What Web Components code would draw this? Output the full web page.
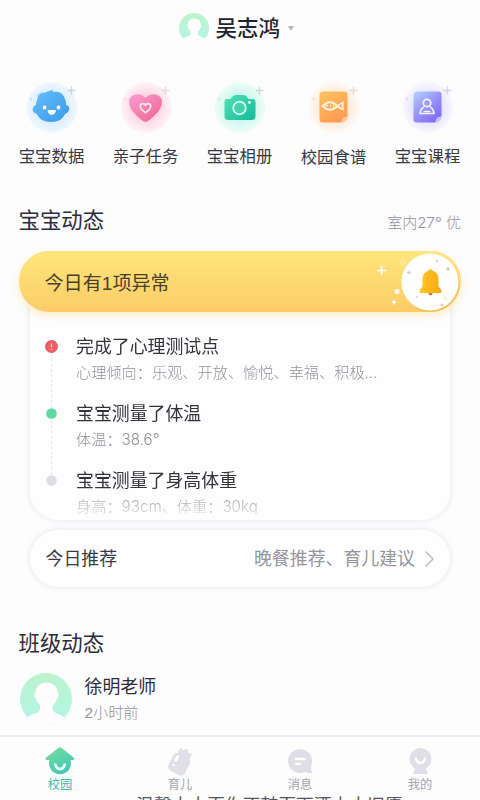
<!DOCTYPE html>
<html lang="zh-CN">
<head>
<meta charset="utf-8">
<title>校园</title>
<style>
html,body{margin:0;height:100%;overflow:hidden}
body{background:#fefdfe;color:#30303c;font-family:"Liberation Sans","Noto Sans CJK SC",sans-serif}
</style>
</head>
<body>
<campus-app></campus-app>
<script>
const define = (name, render) => customElements.define(name, class extends HTMLElement {
  connectedCallback() {
    if (this.shadowRoot) return;
    this.attachShadow({ mode: 'open' }).innerHTML = render(this);
  }
});

const sparkle = c => `<path d="M45.500 3.500v8M41.500 7.500h8" stroke="${c}" stroke-width="1.400" opacity=".6"/><path d="M5 14v4M3 16h4" stroke="${c}" opacity=".3"/>`;

const icons = {
  data: `<defs><linearGradient id="g" x1="0" y1="0" x2="1" y2="1"><stop stop-color="#65bdfb"/><stop offset="1" stop-color="#3a9bea"/></linearGradient><radialGradient id="h"><stop offset=".5" stop-color="#c9e6ff"/><stop offset="1" stop-color="#edf6ff"/></radialGradient></defs>
    <circle cx="26" cy="24.500" r="25.500" fill="url(#h)" opacity=".75"/>${sparkle('#a9bdd3')}
    <g transform="translate(-.5 2)"><path d="M12 14c0-4 4-7 8-6.500 3-1.500 5-1.500 7-2.500l.5 2c6-1 10 1 12 7 1 2 1 4 1 6 4 0 5 7-1 9-2 5-7 8-14 8s-12-3-14-8c-6-1-5-8-1-9 0-2 .5-4 1.500-6z" fill="url(#g)"/><path d="M11 11q3-4 7-3" stroke="#8ed2ff" opacity=".7"/>
    <circle cx="19" cy="22.500" r="1.900" fill="#fff"/><circle cx="33" cy="22.500" r="1.900" fill="#fff"/><path d="M22 25h8.500c-.3 6.300-8.200 6.300-8.500 0z" fill="#fff"/></g>`,
  task: `<defs><linearGradient id="g" x1="0" y1="0" x2="1" y2="1"><stop stop-color="#fb9ed1"/><stop offset="1" stop-color="#ee638e"/></linearGradient><radialGradient id="h"><stop offset=".5" stop-color="#ffcadb"/><stop offset="1" stop-color="#fff1f6"/></radialGradient></defs>
    <circle cx="26" cy="24.500" r="25.500" fill="url(#h)" opacity=".75"/>${sparkle('#d9bfd0')}
    <path d="M25.500 15c4-6 16.500-5 16.500 4 0 8-8 14.500-14 19q-2.500 1.700-5 0C17 33.500 9 27 9 19c0-9 12.500-10 16.500-4z" fill="url(#g)"/>
    <path d="M25.500 22.200c1.600-2.700 5.200-1.800 5.200 1.300 0 2.700-3.200 4.700-5.200 6.200-2-1.500-5.200-3.500-5.200-6.200 0-3.100 3.600-4 5.200-1.300z" fill="none" stroke="#ffe6ee" stroke-width="1.700"/>`,
  album: `<defs><linearGradient id="g" x1="0" y1="0" x2="1" y2="1"><stop stop-color="#56e0b5"/><stop offset="1" stop-color="#12bd98"/></linearGradient><radialGradient id="h"><stop offset=".5" stop-color="#bdf5e5"/><stop offset="1" stop-color="#ebfcf7"/></radialGradient></defs>
    <circle cx="26" cy="24.500" r="25.500" fill="url(#h)" opacity=".75"/>${sparkle('#a5c9c0')}
    <g transform="translate(-.5 2)"><path d="M13 14h4l2-2.500Q20 10 22 10h8q2 0 3 1.500l2 2.500h4q3 0 3 3v14q0 4-4 4H15q-4 0-4-4V17q0-3 2-3z" fill="url(#g)"/><circle cx="26" cy="23" r="6.300" fill="#52d8b8" fill-opacity=".5" stroke="#d5fff4" stroke-width="1.700"/><circle cx="36" cy="17.500" r="1.400" fill="#e0fff7"/></g>`,
  menu: `<defs><linearGradient id="g" x1="0" y1="0" x2=".6" y2="1"><stop stop-color="#ffc45f"/><stop offset="1" stop-color="#ff9a54"/></linearGradient><radialGradient id="h"><stop offset=".45" stop-color="#ffdfc5"/><stop offset="1" stop-color="#fff8f2"/></radialGradient></defs>
    <circle cx="26" cy="24.500" r="25.500" fill="url(#h)" opacity=".75"/>${sparkle('#d9c5b5')}
    <g transform="translate(-.5 1.500)"><path d="M16 7h21q3 0 3 3v22q-5 1-6 6H15q-3 0-3-3V11q0-4 4-4z" fill="url(#g)"/><path d="M34 38c3 0 6-2 6-6-4 0-6 2-6 6z" fill="#ffc79a"/>
    <path d="M30 21.500q3.500-3 5.500-3.500-1 3.500 0 7-2-.5-5.500-3.500zm0 0q-7.500 7.500-15 0 7.500-7.500 15 0z" fill="none" stroke="#fff0dc" stroke-width="1.800"/><circle cx="19" cy="21" r="1.200" fill="#fff0dc"/><path d="M23 20v3M26 20v3" stroke="#fff0dc"/></g>`,
  course: `<defs><linearGradient id="g" x1="0" y1="0" x2=".8" y2="1"><stop stop-color="#b5d3ff"/><stop offset=".5" stop-color="#9995fa"/><stop offset="1" stop-color="#7f68f3"/></linearGradient><radialGradient id="h"><stop offset=".45" stop-color="#dcd7ff"/><stop offset="1" stop-color="#f7f5ff"/></radialGradient></defs>
    <circle cx="26" cy="24.500" r="25.500" fill="url(#h)" opacity=".75"/>${sparkle('#bdb9d3')}
    <g transform="translate(-.5 1.500)"><path d="M16 7h21q3 0 3 3v22q-5 1-6 6H15q-3 0-3-3V11q0-4 4-4z" fill="url(#g)"/><path d="M34 38c3 0 6-2 6-6-4 0-6 2-6 6z" fill="#c9c0ff"/>
    <circle cx="25.500" cy="18.500" r="3.700" fill="none" stroke="#f2f2ff" stroke-width="1.800"/><path d="M22.500 22.500q-3 1-4 6.500h14q-1-5.500-4-6.500M22 27h7" fill="none" stroke="#f2f2ff" stroke-width="1.700" stroke-linejoin="round"/></g>`
};

const tabs = {
  home: `<defs><linearGradient id="g" x1="0" y1="0" x2=".6" y2="1"><stop stop-color="#7edc9c"/><stop offset="1" stop-color="#3fc9b4"/></linearGradient></defs><path d="M15 1.500Q16 .8 17 1.500L30 12q.6 2-1.500 2H26.500A11 11 0 1 1 5.500 14H3q-2.200 0-1.500-2z" fill="url(#g)"/><path d="M11 17.500q1.200 5.500 5 5.500t5-5.500" fill="none" stroke="#e8fff8" stroke-width="2.800"/>`,
  bottle: `<g transform="rotate(27 16 16)"><rect x="7" y="8.500" width="18.500" height="19.500" rx="4.500" fill="#e0dfe7"/><path d="M10.500 9V4l3 1 3-3 3 3 3-1V9z" fill="#e0dfe7" stroke="#e0dfe7" stroke-width="1.500" stroke-linejoin="round"/><path d="M11.500 12.500v4" stroke="#fff" stroke-width="3" stroke-linecap="round"/><circle cx="11.500" cy="21.500" r="1.200" fill="#fff"/></g>`,
  chat: `<path d="M16 3a12 12 0 0 1 12 12c0 4-1 6-1 7q0 3 1.500 5h-5q-1.500-1-2.500-1-2 1-5 1a12 12 0 0 1 0-24z" fill="#e0dfe7"/><path d="M12 13h9M12 17.800h4" stroke="#fff" stroke-width="2.300" stroke-linecap="round"/>`,
  me: `<path d="M16.500 2a11 11 0 0 1 5.500 20.500l1.500 4q.5 1.500-1 1.500H10.500q-1.500 0-1-1.500l1.500-4A11 11 0 0 1 16.500 2z" fill="#e0dfe7"/><path d="M12 12.500q1 4.500 4.500 4.500t4.500-4.500" fill="none" stroke="#fff" stroke-width="2.500" stroke-linecap="round"/>`
};

define('user-avatar', () => `<style>:host{display:block;flex:none}svg{display:block;width:100%;height:100%}</style>
  <svg viewBox="0 0 52 52"><defs><linearGradient id="a" x1="0" y1="0" x2="0" y2="1"><stop stop-color="#bdf3ce"/><stop offset="1" stop-color="#b1f5e9"/></linearGradient><clipPath id="c"><circle cx="26" cy="26" r="26"/></clipPath></defs>
  <g clip-path="url(#c)"><rect width="52" height="52" fill="url(#a)"/><path d="M26.500 9.500c7 0 11 4.500 11 10.500 2 1 1.500 4.500-.4 5.500-.8 3-2.300 5-4.400 6.500v4c0 2 2 3.500 4 4.500 4 1.500 8 3 9 6.500v5H6v-5c1-3.500 5-5 9-6.500 3-1 5-2.500 5-4.500v-4c-2-1.500-3.300-3.500-4-6.500-2-1-2.400-4.500-.4-5.500 0-6 4-10.500 10.900-10.500z" fill="#fefdfe"/></g></svg>`);

define('app-header', () => `<style>:host{display:flex;height:57px;align-items:center;padding-left:178.500px;box-sizing:border-box;font-size:21.500px;font-weight:500;line-height:30px;color:#22222c}
  user-avatar{width:30px;height:30px;margin-right:7px;margin-top:-1px}i{border:solid transparent;border-width:5px 3.500px 0;border-top-color:#b5b5b9;margin-left:8px;margin-top:-1px}</style>
  <user-avatar></user-avatar><slot></slot><i></i>`);

define('quick-entry', el => `<style>:host{display:flex;flex-direction:column;align-items:center;width:66px;font-size:16.400px;line-height:24px;white-space:nowrap;color:#383842}:host([icon=menu]) svg{margin-bottom:10px}svg{width:52px;height:52px;margin-bottom:9px;overflow:visible}</style>
  <svg viewBox="0 0 52 52" fill="none">${icons[el.getAttribute('icon')]}</svg><slot></slot>`);

define('quick-grid', () => `<style>:host{display:flex;justify-content:space-between;padding:26px 19.500px 0 18.500px;height:116px;box-sizing:border-box}</style><slot></slot>`);

define('section-title', () => `<style>:host{display:flex;justify-content:space-between;align-items:center;padding:0 19px 0 18.500px;height:34px;font-size:21.400px;line-height:34px;color:#2c2c3a}
  ::slotted([slot=extra]){font-family:Inter,"Noto Sans CJK SC",sans-serif;font-weight:300;font-size:15px;color:#92929d;padding-top:3px}</style><span><slot></slot></span><slot name="extra"></slot>`);

define('alert-banner', () => `<style>:host{display:flex;box-sizing:border-box;height:61px;margin:0 19px;padding:0 1px 0 25.500px;border-radius:31px;align-items:center;background:linear-gradient(#fee77c,#fccb68);box-shadow:0 3px 9px #fbd98380,inset 0 1px 1px #fbe28f;position:relative;font-size:19.100px;line-height:28px;color:#4b3f2b}
  span{flex:1;padding-top:4px}svg{display:block;height:60px;width:90px}</style><span><slot></slot></span>
  <svg viewBox="0 0 90 60"><defs><linearGradient id="b"><stop stop-color="#ffca25"/><stop offset="1" stop-color="#f8a913"/></linearGradient></defs>
  <circle cx="61" cy="31.500" r="28.500" fill="#e5b23c" opacity=".5"/><circle cx="60" cy="30" r="28.500" fill="#fff"/>
  <path d="M11.500 14v9M7 18.500h9M24 48v4.500M21.800 50.200h4.500" stroke="#fff" stroke-width="1.500"/><circle cx="27" cy="39.500" r="2.500" fill="#fff"/><circle cx="33" cy="10.500" r="2.200" fill="none" stroke="#fff2b2"/>
  <path d="M39 18.500v4M37 20.500h4M78 15v4M76 17h4M72 51.500v3M70.500 53h3" stroke="#d0c8bf" stroke-width="1.200"/><circle cx="67" cy="9" r="1.200" fill="#ddd0b8"/><circle cx="47" cy="45" r="1" fill="#ddd0b8"/><circle cx="75.500" cy="46.500" r="1.500" fill="none" stroke="#f6e1ba"/>
  <g transform="translate(.5 -.5)"><circle cx="60" cy="42" r="2" fill="#c3842e"/><circle cx="60" cy="19.500" r="2" fill="#fac126"/><path d="M60 19c5.500 0 8 4.500 8 9v6c0 2 3 3.500 3 6 0 1-.5 1.500-1.500 1.500h-19c-1 0-1.500-.5-1.500-1.500 0-2.500 3-4 3-6v-6c0-4.500 2.500-9 8-9z" fill="url(#b)"/><path d="M51 37.500h17M60 23c-2.500 1-3.500 3-3.500 6v6" stroke="#e99d10" opacity=".45" fill="none"/></g></svg>`);

define('timeline-item', el => `<style>:host{display:grid;grid-template-columns:13px 1fr;column-gap:18.500px;height:67.200px}
  .rail{display:flex;flex-direction:column;align-items:center}
  .slot{height:13px;display:flex;align-items:center;margin-top:6px}
  .line{flex:1;width:0;border-left:1px dashed #e6e5ea;margin-bottom:-7px}
  :host([state=idle]) .line{display:none}
  b{font-weight:400;display:block;font-size:17.900px;line-height:27px;color:#33333b}
  ::slotted(*){font-family:Inter,"Noto Sans CJK SC",sans-serif;font-weight:300;font-size:15.200px;line-height:24px;color:#92929a;white-space:nowrap}</style>
  <div class="rail"><div class="slot"><svg width="13" height="13">${{
    alert: '<circle cx="6.500" cy="6.500" r="6.500" fill="#ea5d61"/><path d="M6.500 3.500v4M6.500 8.800v1.200" stroke="#ffcfcc" stroke-width="1.300"/>',
    ok: '<circle cx="6.500" cy="6.500" r="5.300" fill="#5fd8a3"/>',
    idle: '<circle cx="6.500" cy="6.500" r="5.300" fill="#dedde1"/>' }[el.getAttribute('state')]}</svg></div><div class="line"></div></div>
  <div><b>${el.getAttribute('heading')}</b><slot></slot></div>`);

define('timeline-card', () => `<style>:host{display:block;box-sizing:border-box;height:238px;margin:-30px 30px 0;padding:52px 15px 0 14.500px;border-radius:28px;background:#fffeff;box-shadow:0 0 7px #e5e3eb}
  div{height:180px;overflow:hidden;-webkit-mask-image:linear-gradient(#000 157px,#0005 180px);mask-image:linear-gradient(#000 157px,#0005 180px)}</style><div><slot></slot></div>`);

define('recommend-bar', () => `<style>:host{display:flex;align-items:center;box-sizing:border-box;height:57px;margin:10px 30px 0;padding:0 15px 0 15.500px;border-radius:29px;background:#fffeff;box-shadow:0 0 7px #e5e3eb;font-size:17.900px;line-height:28px;color:#3a3a44;white-space:nowrap}
  ::slotted([slot=value]){margin-left:auto;color:#95959c}svg{margin-left:9px}</style><slot></slot><slot name="value"></slot>
  <svg width="11" height="18" fill="none"><path d="M1.500 1.500L9 9l-7.500 7.500" stroke="#bdbdc3" stroke-width="1.500"/></svg>`);

define('class-post', () => `<style>:host{display:block;padding:0 20px}
  header{display:flex;gap:12.500px;height:54px}user-avatar{width:52px;height:52px}
  ::slotted(*){display:block}::slotted([slot=name]){font-size:17.900px;line-height:27px;color:#2d2d39}::slotted([slot=time]){font-weight:300;font-size:15.200px;line-height:24px;color:#92929a}
  .info{padding-top:1px}.body{margin:66px 0 0 116px;font-size:17.800px;line-height:26px;color:#55555d;white-space:nowrap}</style>
  <header><user-avatar></user-avatar><div class="info"><slot name="name"></slot><slot name="time"></slot></div></header><div class="body"><slot></slot></div>`);

define('tab-item', el => `<style>:host{flex:1;display:flex;flex-direction:column;align-items:center;font-size:12.300px;line-height:18px;color:#a3a3aa}:host([active]){color:#45b9a5}svg{width:32px;height:32px;margin-bottom:-2px}</style>
  <svg viewBox="0 0 32 32">${tabs[el.getAttribute('icon')]}</svg><slot></slot>`);

define('tab-bar', () => `<style>:host{display:flex;height:61px;box-sizing:border-box;border-top:2px solid #ecebee;background:#fefdfe;padding-top:9px}</style><slot></slot>`);

define('campus-app', () => `<style>:host{display:grid;grid-template-rows:1fr 65px;height:800px;width:480px;overflow:hidden}
  main{grid-area:1/1/3/2;overflow:hidden;min-height:0}tab-bar{grid-area:2/1;position:relative}
  .first{margin-top:31px;margin-bottom:13px}.second{margin-top:40px;margin-bottom:12px}</style>
  <main>
    <app-header>吴志鸿</app-header>
    <quick-grid><quick-entry icon="data">宝宝数据</quick-entry><quick-entry icon="task">亲子任务</quick-entry><quick-entry icon="album">宝宝相册</quick-entry><quick-entry icon="menu">校园食谱</quick-entry><quick-entry icon="course">宝宝课程</quick-entry></quick-grid>
    <section-title class="first">宝宝动态<span slot="extra">室内27° 优</span></section-title>
    <alert-banner>今日有1项异常</alert-banner>
    <timeline-card>
      <timeline-item state="alert" heading="完成了心理测试点"><span>心理倾向：乐观、开放、愉悦、幸福、积极...</span></timeline-item>
      <timeline-item state="ok" heading="宝宝测量了体温"><span>体温：38.6°</span></timeline-item>
      <timeline-item state="idle" heading="宝宝测量了身高体重"><span>身高：93cm、体重：30kg</span></timeline-item>
    </timeline-card>
    <recommend-bar>今日推荐<span slot="value">晚餐推荐、育儿建议</span></recommend-bar>
    <section-title class="second">班级动态</section-title>
    <class-post><span slot="name">徐明老师</span><span slot="time">2小时前</span>温馨大大页你不鼓页面酒十大旧愿</class-post>
  </main>
  <tab-bar><tab-item icon="home" active>校园</tab-item><tab-item icon="bottle">育儿</tab-item><tab-item icon="chat">消息</tab-item><tab-item icon="me">我的</tab-item></tab-bar>`);
</script>
</body>
</html>
